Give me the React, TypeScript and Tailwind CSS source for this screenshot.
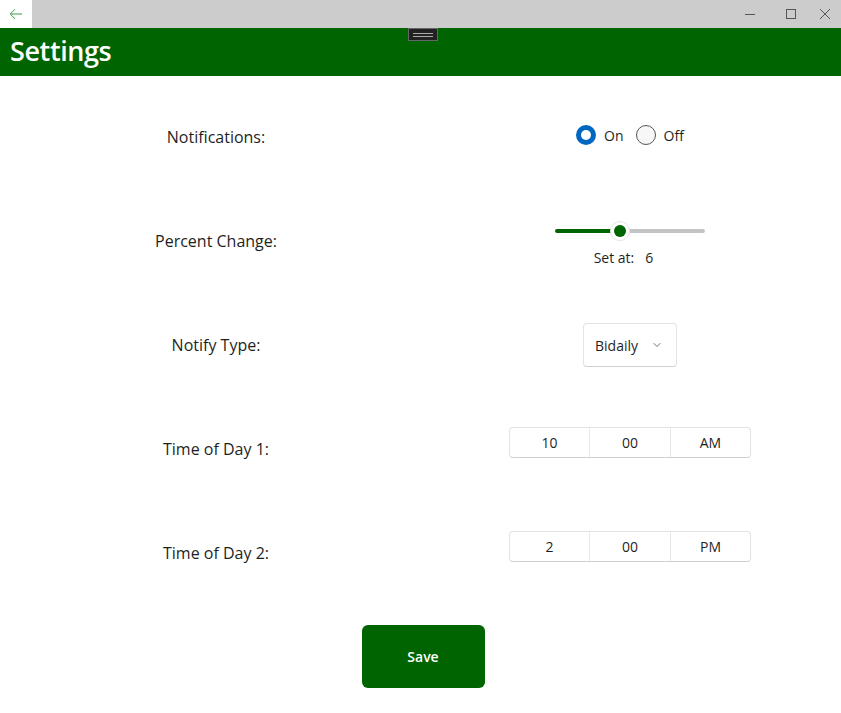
import { ChevronDown } from "lucide-react"

const font = { fontFamily: '"Open Sans", "Noto Sans", sans-serif' }

function Label({ text }: { text: string }) {
  return (
    <div className="w-[432px] flex justify-center text-[16px] text-[#1f1f1f]">{text}</div>
  )
}

function Radio({ label, checked }: { label: string; checked?: boolean }) {
  return (
    <div className="flex items-center gap-2">
      {checked ? (
        <div className="w-5 h-5 rounded-full bg-[#0067c0] flex items-center justify-center">
          <div className="w-[10px] h-[10px] rounded-full bg-white" />
        </div>
      ) : (
        <div className="w-5 h-5 rounded-full border border-[#555] bg-[#f7f7f7]" />
      )}
      <span className="text-[14px] text-[#1f1f1f]">{label}</span>
    </div>
  )
}

function TimePicker({ h, m, p }: { h: string; m: string; p: string }) {
  return (
    <div className="flex w-[242px] h-[31px] border border-[#e3e3e3] border-b-[#cfcfcf] rounded-[4px] bg-white text-[14px] text-[#1f1f1f]">
      <div className="w-[80px] flex items-center justify-center border-r border-[#e8e8e8]">{h}</div>
      <div className="w-[81px] flex items-center justify-center border-r border-[#e8e8e8]">{m}</div>
      <div className="flex-1 flex items-center justify-center">{p}</div>
    </div>
  )
}

export default function App() {
  return (
    <div className="w-[841px] h-[713px] bg-white overflow-hidden" style={font}>
      {/* title bar */}
      <div className="h-[28px] bg-[#cccccc] flex items-stretch">
        <div className="w-[32px] bg-white flex items-center justify-center">
          <svg width="14" height="12" viewBox="0 0 14 12" fill="none" stroke="#3c9a48" strokeWidth="1">
            <path d="M13 6H1.5M6 1.2L1.2 6L6 10.8" />
          </svg>
        </div>
        <div className="flex-1" />
        <div className="flex items-center">
          <div className="w-[41px] flex justify-center">
            <svg width="10" height="10" viewBox="0 0 10 10"><path d="M0 5.5H10" stroke="#555" /></svg>
          </div>
          <div className="w-[41px] flex justify-center">
            <svg width="10" height="10" viewBox="0 0 10 10"><rect x="0.5" y="0.5" width="9" height="9" fill="none" stroke="#555" /></svg>
          </div>
          <div className="w-[28px] flex justify-center mr-[2px]">
            <svg width="10" height="10" viewBox="0 0 10 10"><path d="M0 0L10 10M10 0L0 10" stroke="#555" /></svg>
          </div>
        </div>
      </div>

      {/* header */}
      <div className="relative h-[48px] bg-[#006400] flex items-center px-[10px]">
        <span className="text-white text-[27px] font-semibold tracking-[-0.4px] -mt-[2px]">Settings</span>
        <div className="absolute left-[408px] top-0 w-[30px] h-[13px] bg-[#222] border border-[#666] flex flex-col items-center justify-center gap-[2px]">
          <div className="w-[20px] h-px bg-[#aaa]" />
          <div className="w-[20px] h-px bg-[#aaa]" />
        </div>
      </div>

      <div className="pt-[9px] flex flex-col">
        <div className="h-[104px] flex items-center">
          <Label text="Notifications:" />
          <div className="w-[396px] flex justify-center gap-[12px] -mt-[4px]">
            <Radio label="On" checked />
            <Radio label="Off" />
          </div>
        </div>

        <div className="h-[104px] flex items-center">
          <Label text="Percent Change:" />
          <div className="w-[396px] flex flex-col items-center mt-[6px]">
            <div className="relative w-[150px] h-[20px] flex items-center">
              <div className="w-[58px] h-[4px] rounded-l-full bg-[#006400]" />
              <div className="flex-1 h-[4px] rounded-r-full bg-[#c4c4c4]" />
              <div className="absolute left-[55px] top-0 w-[20px] h-[20px] rounded-full bg-white border border-[#e6e6e6] flex items-center justify-center">
                <div className="w-[12px] h-[12px] rounded-full bg-[#006400]" />
              </div>
            </div>
            <div className="mt-[6px] -ml-[13px] text-[14px] text-[#1f1f1f] flex gap-[11px]">
              <span>Set at:</span>
              <span>6</span>
            </div>
          </div>
        </div>

        <div className="h-[104px] flex items-center">
          <Label text="Notify Type:" />
          <div className="w-[396px] flex justify-center">
            <div className="w-[94px] h-[44px] border border-[#e3e3e3] border-b-[#d0d0d0] rounded-[4px] flex items-center pl-[11px] gap-[13px] text-[14px] text-[#1f1f1f]">
              <span>Bidaily</span>
              <ChevronDown size={12} strokeWidth={1.5} color="#444" />
            </div>
          </div>
        </div>

        <div className="h-[104px] flex items-center">
          <Label text="Time of Day 1:" />
          <div className="w-[396px] flex justify-center mb-[14px]">
            <TimePicker h="10" m="00" p="AM" />
          </div>
        </div>

        <div className="h-[104px] flex items-center">
          <Label text="Time of Day 2:" />
          <div className="w-[396px] flex justify-center mb-[14px]">
            <TimePicker h="2" m="00" p="PM" />
          </div>
        </div>

        <div className="mt-[20px] flex justify-center">
          <button className="w-[123px] h-[63px] rounded-[6px] bg-[#006400] text-white text-[14px] font-semibold ml-[5px]">
            Save
          </button>
        </div>
      </div>
    </div>
  )
}
